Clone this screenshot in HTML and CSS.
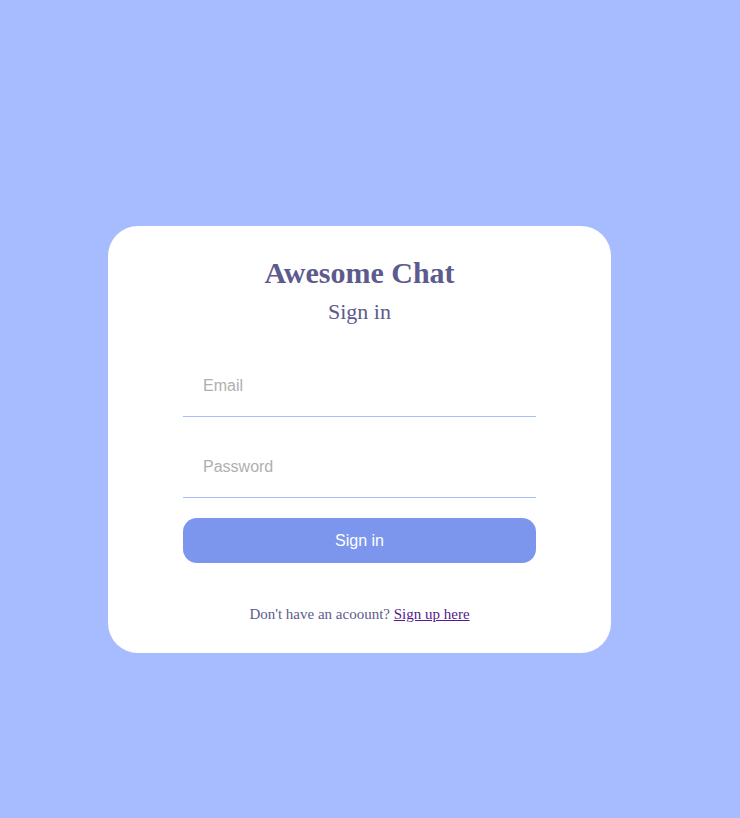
FILE: index.html
```html
<!DOCTYPE html>
<html>
<head>
<meta charset="utf-8">
<link rel="stylesheet" href="styles.css">
</head>
<body>
<div class="page">
  <div class="card">
    <h1 class="logo">Awesome Chat</h1>
    <div class="subtitle">Sign in</div>
    <form class="form">
      <input class="field" type="email" placeholder="Email">
      <input class="field field-gap" type="password" placeholder="Password">
      <button class="btn" type="button">Sign in</button>
    </form>
    <p class="footer">Don't have an acoount? <a class="link" href="#">Sign up here</a></p>
  </div>
</div>
</body>
</html>
```
FILE: styles.css
```css
html, body {
  margin: 0;
  padding: 0;
}
body {
  background: #a7bcff;
  height: 818px;
  overflow: hidden;
  font-family: "Liberation Serif", "Times New Roman", serif;
}
.page {
  padding: 226px 0 0 108px;
}
.card {
  box-sizing: border-box;
  width: 503px;
  height: 427px;
  background: #fff;
  border-radius: 30px;
  padding: 29px 75px 0;
  display: flex;
  flex-direction: column;
  align-items: center;
}
.logo {
  margin: 0;
  font-size: 30px;
  line-height: 36px;
  font-weight: bold;
  color: #5d5b8d;
}
.subtitle {
  margin-top: 8px;
  font-size: 22px;
  line-height: 26px;
  color: #5d5b8d;
}
.form {
  margin-top: 32px;
  width: 100%;
  display: flex;
  flex-direction: column;
  gap: 20px;
}
.field {
  box-sizing: border-box;
  width: 100%;
  height: 60px;
  padding: 0 20px 2px;
  border: none;
  border-bottom: 1px solid #a7bcff;
  outline: none;
  font-family: "Liberation Sans", Arial, sans-serif;
  font-size: 16px;
  background: transparent;
}
.field-gap {
  margin-top: 1px;
}
.field::placeholder {
  color: #afafaf;
}
.btn {
  height: 45px;
  border: none;
  border-radius: 14px;
  background: #7b96ec;
  color: #fff;
  font-family: "Liberation Sans", Arial, sans-serif;
  font-size: 16px;
  cursor: pointer;
}
.footer {
  margin: 43px 0 0;
  font-size: 15px;
  line-height: 17px;
  color: #5d5b8d;
}
.link {
  color: #551a8b;
  text-decoration: underline;
}
```
